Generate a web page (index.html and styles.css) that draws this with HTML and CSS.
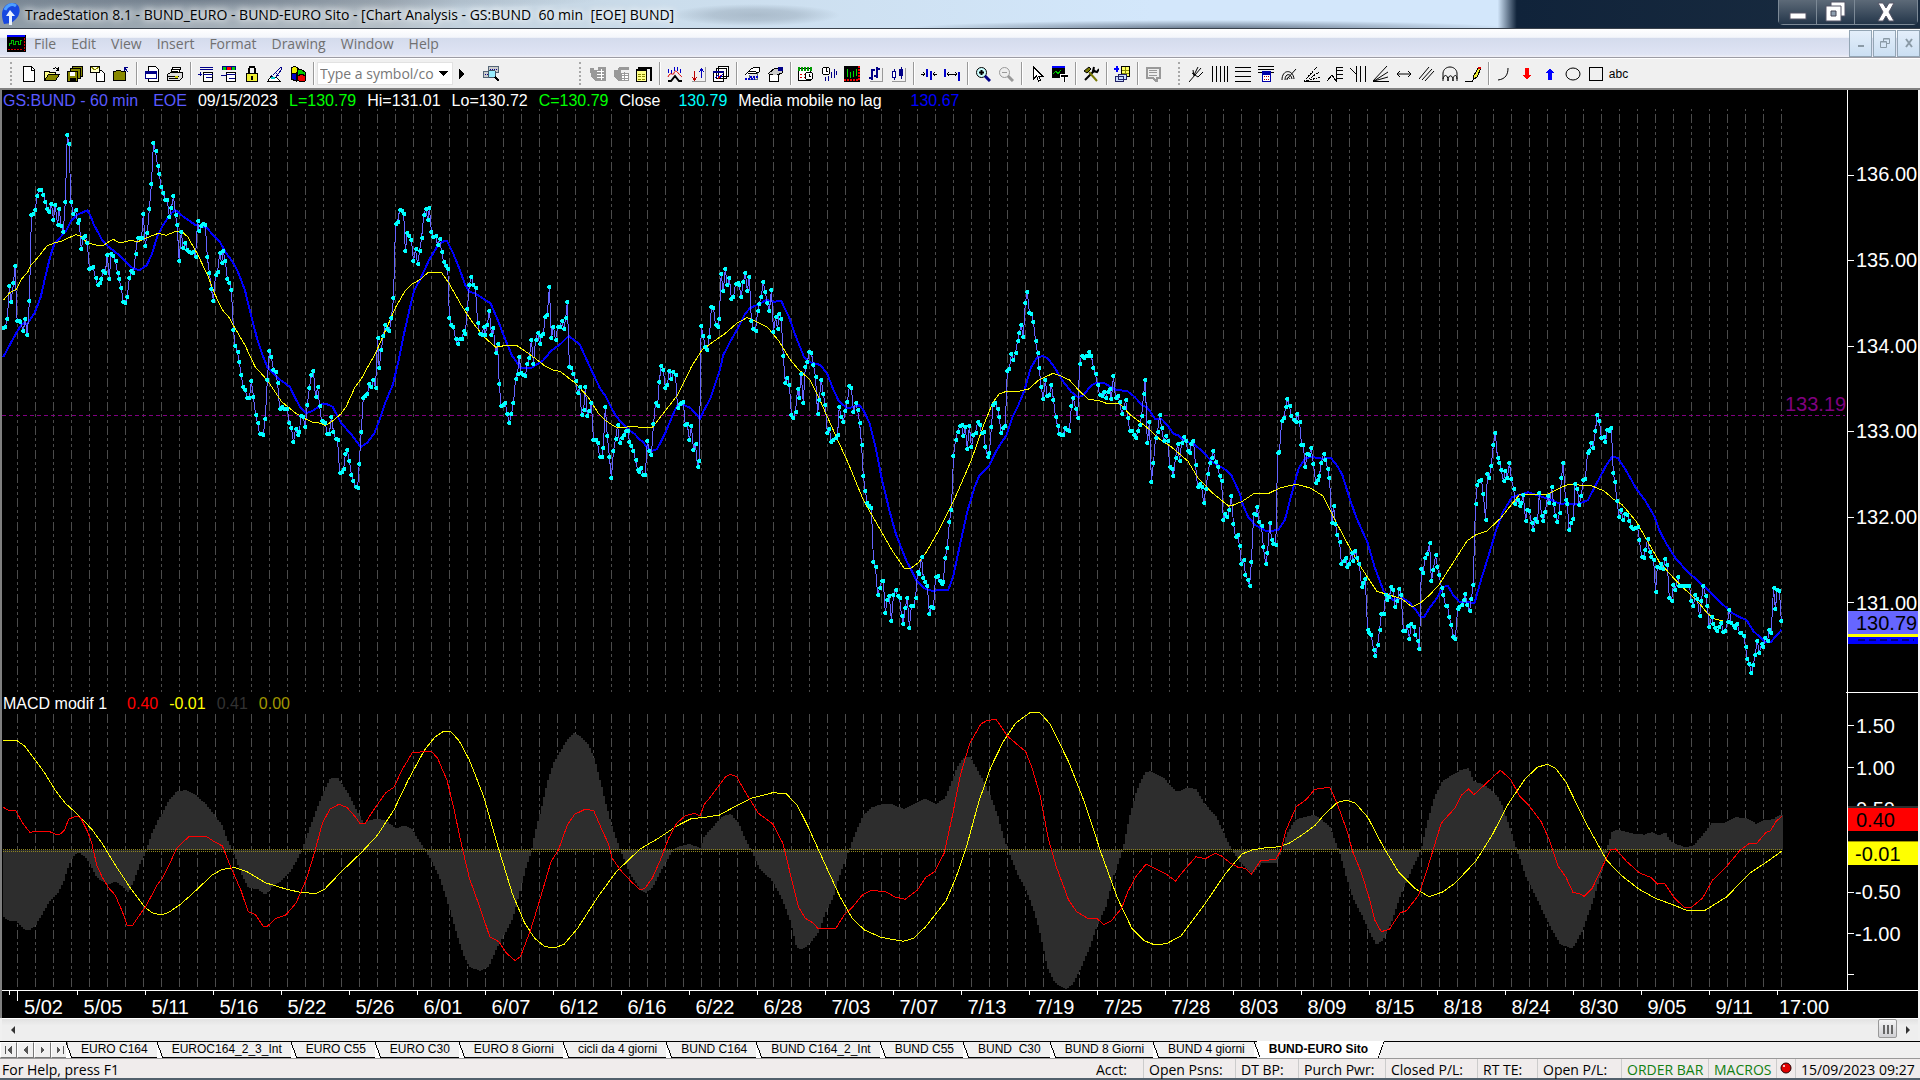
FILE: index.html
```html
<!DOCTYPE html>
<html lang="en">
<head>
    <meta charset="UTF-8">
    <title>TradeStation 8.1 - BUND_EURO</title>
    <link rel="stylesheet" href="styles.css">
</head>
<body>
    <header class="titlebar">
        <svg class="app-icon" width="20" height="24" viewBox="0 0 20 24"><path d="M3 22C-1 12 1 3 10 1c7-1 10 5 8 11-1 4-5 7-8 9z" fill="#1747e0"/><path d="M4 8c2-5 7-7 11-4" stroke="#4fa0ff" stroke-width="3" fill="none"/><path d="M9 8l5 6h-3v9H8v-9H5z" fill="#e8f0ff"/></svg>
        <h1>TradeStation 8.1 - BUND_EURO - BUND-EURO Sito - [Chart Analysis - GS:BUND  60 min  [EOE] BUND]</h1>
        <div class="window-buttons">
            <button aria-label="Minimize"><svg width="20" height="20"><rect x="2" y="11" width="16" height="6" fill="#fff" stroke="#556"/></svg></button>
            <button aria-label="Restore"><svg width="22" height="22"><path d="M6 1h14v14H6z" fill="#fff" stroke="#556"/><path d="M1 5h15v15H1z" fill="#fff" stroke="#556"/><path d="M6 10h5v5H6z" fill="#8fa0b0" stroke="#445"/></svg></button>
            <button class="close" aria-label="Close"><svg width="20" height="20"><path d="M2 1h5l3 5 3-5h5l-5 9 5 9h-5l-3-5-3 5H2l5-9z" fill="#fff" stroke="#556"/></svg></button>
        </div>
    </header>

    <nav class="menubar">
        <svg class="doc-icon" width="19" height="17" viewBox="0 0 19 17" shape-rendering="crispEdges"><path d="M0 0h19v17H0z"/><path d="M0 1h18" stroke="#00f" stroke-width="2"/><path d="M2 11V8h2V5h2v4h2V6h3v3h2V5h2" stroke="#0b0" fill="none"/><path d="M1 14h15M17 3v13" stroke="#d00" stroke-dasharray="2 1"/></svg>
        <a href="#">File</a>
        <a href="#">Edit</a>
        <a href="#">View</a>
        <a href="#">Insert</a>
        <a href="#">Format</a>
        <a href="#">Drawing</a>
        <a href="#">Window</a>
        <a href="#">Help</a>
        <div class="mdi-buttons">
            <button aria-label="Minimize chart"><svg width="12" height="12"><path d="M3 9h6" stroke="#8a9aa6" stroke-width="2"/></svg></button>
            <button aria-label="Restore chart"><svg width="12" height="12" fill="none" stroke="#8a9aa6"><path d="M4.500 4V1.500h6v5H8M1.500 4.500h6v6h-6z"/><path d="M2 5h5M5 2h5"/></svg></button>
            <button aria-label="Close chart"><svg width="12" height="12"><path d="M3 2l6 8M9 2l-6 8" stroke="#8a9aa6" stroke-width="2"/></svg></button>
        </div>
    </nav>

    <div class="toolbars">
        <div class="toolbar">
            <button aria-label="New"><svg viewBox="0 0 16 16"><path d="M2.500.5h8l3 3v12h-11z" fill="#fff" stroke="#000"/><path d="M10.500 1v3h3" fill="none" stroke="#000"/></svg></button>
            <button aria-label="Open"><svg viewBox="0 0 16 16"><path d="M.5 14V5h4l1 1h6v3" fill="#ff8" stroke="#000"/><path d="M.5 14.500l4-6h11l-4 6z" fill="#880" stroke="#000"/><path d="M9 3c2-2 4-1 5 1M14.500 1v3h-3" fill="none" stroke="#000"/></svg></button>
            <button aria-label="Save all"><svg viewBox="0 0 16 16"><path d="M5.500.5h10v10h-10z" fill="#880" stroke="#000"/><path d="M3.500 2.500h10v10h-10z" fill="#880" stroke="#000"/><path d="M.5 5.500h10v10H.5z" fill="#880" stroke="#000"/><path d="M3 6h5v4H3z" fill="#fff"/><path d="M3 12h6v3H3z"/></svg></button>
            <button aria-label="Send workspace"><svg viewBox="0 0 16 16"><path d="M6.500 4.500h5l3 3v8h-8z" fill="#fff" stroke="#000"/><path d="M.5.5h9v6h-9z" fill="#ffc" stroke="#000"/><path d="M1 1l4 3 4-3" fill="none" stroke="#880"/></svg></button>
            <button aria-label="Close workspace"><svg viewBox="0 0 16 16"><path d="M.5 14.500v-9h2l1-1h4l1 1h4v9z" fill="#880" stroke="#000"/><path d="M15 6L11 1M11 5V1h4" fill="none" stroke="#008"/></svg></button>
            <span class="separator"></span>
            <button aria-label="New window"><svg viewBox="0 0 16 16"><path d="M4.500.5h7l3 3v12h-10z" fill="#fff" stroke="#000"/><path d="M1.500 5.500h11v7h-11z" fill="#fff" stroke="#008"/><path d="M1 6.500h12" stroke="#008" stroke-width="3"/></svg></button>
            <button aria-label="Print"><svg viewBox="0 0 16 16"><path d="M4 6l2-5h8l-2 5" fill="#fff" stroke="#000"/><path d="M6 3h6M5 5h6" stroke="#000"/><path d="M.5 8.500l3-2h12v5l-3 3H.5z" fill="#ddd" stroke="#000"/><path d="M1 10h11M2 12h9" stroke="#000"/><path d="M8 11h3" stroke="#cc0" stroke-width="2"/></svg></button>
            <span class="separator"></span>
            <button aria-label="Status bar"><svg viewBox="0 0 16 16"><path d="M2 1h13M2 3h13" stroke="#008"/><path d="M5.500 6.500h9v9h-9z" fill="#fff" stroke="#000"/><path d="M5 8h10M8 11h6" stroke="#008"/><path d="M0 8h4M2 6v4" stroke="#008"/></svg></button>
            <button aria-label="Chart bar"><svg viewBox="0 0 16 16"><path d="M1 2h14" stroke="#008" stroke-width="4"/><path d="M2 2h3" stroke="#0c0" stroke-width="3"/><path d="M6 2h4" stroke="#f00" stroke-width="3"/><path d="M11 2h3" stroke="#0c0" stroke-width="3"/><path d="M5.500 6.500h9v9h-9z" fill="#fff" stroke="#000"/><path d="M5 8h10M0 9h5M8 12h6" stroke="#008"/></svg></button>
            <button aria-label="Lock"><svg viewBox="0 0 16 16"><path d="M5 8V3l1-2h4l1 2v5" fill="none" stroke="#000" stroke-width="2"/><path d="M2.500 7.500h11v8h-11z" fill="#ee3" stroke="#000"/><path d="M7 10h2v4H7z"/></svg></button>
            <button aria-label="EasyLanguage"><svg viewBox="0 0 16 16"><path d="M6 9l8-8 1 2-6 8M8 6l4 4M4 9l4 5" fill="none" stroke="#008"/><path d="M1 15l3-5 3 3 2-2 4 4z" fill="#fff" stroke="#000"/><path d="M4 12h4" stroke="#0cc" stroke-width="2"/></svg></button>
            <button aria-label="Radar screen"><svg viewBox="0 0 16 16"><path d="M1 2l4-2 4 3v5L4 9 1 6z" fill="#ee0" stroke="#000"/><path d="M7 4l4-1 4 3v4H7z" fill="#0c0" stroke="#000"/><path d="M1 8l5-1v8l-5-2z" fill="#00c" stroke="#000"/><path d="M7 10l5-2 3 2v5l-4 1-4-2z" fill="#e00" stroke="#000"/></svg></button>
            <span class="separator"></span>
            <div class="symbol-box">
                <input type="text" placeholder="Type a symbol/co" aria-label="Symbol or company">
                <button aria-label="Symbol history"><svg viewBox="0 0 9 5"><path d="M0 0h9L4.500 5z"/></svg></button>
            </div>
            <button class="go" aria-label="Go"><svg viewBox="0 0 6 10"><path d="M0 0l6 5-6 5z"/></svg></button>
            <button class="lookup" aria-label="Symbol lookup"><svg viewBox="0 0 16 16"><path d="M.5 5.500h8v6h-8zM5.500.5h10v6h-10z" fill="#ccc" stroke="#567"/><path d="M7 3h7M2 8h5" stroke="#008" stroke-dasharray="1 1"/><circle cx="9" cy="8" r="4" fill="#9ef" stroke="#456"/><path d="M12 11l4 4" stroke="#000" stroke-width="2"/></svg></button>
        </div>

        <div class="toolbar charting">
            <button aria-label="Buy order" disabled><svg viewBox="0 0 16 16"><path d="M0 2h4v2h4V1h8v14H5l-4-4z" fill="#999"/><path d="M7 5h7M7 8h7M7 11h7M11 3v11" stroke="#fff"/></svg></button>
            <button aria-label="Sell order" disabled><svg viewBox="0 0 16 16"><path d="M1 4h4l1-3h10v3H8v11H5l-4-5z" fill="#999"/><path d="M8 7h7v7H8z" fill="#fff" stroke="#999"/><path d="M8 9h7M8 12h7M11 6v9" stroke="#999"/></svg></button>
            <button aria-label="Order bar"><svg viewBox="0 0 16 16"><path d="M2 2h14M15 1v14" stroke="#000" stroke-width="2"/><path d="M.5 3.500h10v12H.5z" fill="#ff8" stroke="#000"/><path d="M0 4h11" stroke="#000" stroke-width="2"/><path d="M2 8h7M2 10h7M2 13h7" stroke="#880" stroke-dasharray="3 1"/></svg></button>
            <span class="separator"></span>
            <button aria-label="Insert analysis"><svg class="smooth" viewBox="0 0 16 16"><path d="M1.500 3v4M4.500 4v4M7.500 1v4M10.500 1v4M13.500 3v4" stroke="#00c"/><path d="M1 11c3-7 5 0 6-4 2-5 4 1 8 4" fill="none" stroke="#d00"/><path d="M1 15h3l4-5 4 5h3" fill="none" stroke="#000" stroke-width="2"/></svg></button>
            <button aria-label="Insert strategy"><svg viewBox="0 0 16 16"><path d="M4.500 5v9M2 11l2.500 3L7 11" fill="none" stroke="#b00"/><path d="M11.500 12V3M9 6l2.500-3L14 6" fill="none" stroke="#00b"/><path d="M15.500 1v14H2" fill="none" stroke="#999"/></svg></button>
            <button aria-label="Insert symbol"><svg viewBox="0 0 16 16"><path d="M5.500.5h10v10h-10zM3.500 2.500h10v10h-10zM.5 5.500h10v10H.5z" fill="#fff" stroke="#000"/><path d="M0 6h11" stroke="#008" stroke-width="2"/><path d="M2 12l3-3 2 3 3-4" fill="none" stroke="#00c"/><path d="M5 13l3-4" stroke="#d00"/></svg></button>
            <span class="separator"></span>
            <button aria-label="Format symbol"><svg viewBox="0 0 16 16"><path d="M5.500 5.500h8v8h-8z" fill="#ddd" stroke="#567"/><path d="M1 9l6-6 4-2h4v5l-5 2" fill="#fff" stroke="#000"/><path d="M5 5h7M4 7h6" stroke="#000"/><path d="M1 13h10M6 11h8" stroke="#00c" stroke-width="2" stroke-dasharray="2 1"/></svg></button>
            <button aria-label="Format window"><svg viewBox="0 0 16 16"><path d="M2.500 7.500h9v8h-9z" fill="#fff" stroke="#000"/><path d="M2 8h10" stroke="#000" stroke-width="2"/><path d="M1 8l7-6h7v5l-5 2" fill="#ccc" stroke="#000"/><path d="M11 3h5" stroke="#008" stroke-width="4"/></svg></button>
            <span class="separator"></span>
            <button aria-label="Session"><svg viewBox="0 0 16 16"><path d="M.5 2.500h12v12H.5z" fill="#fff" stroke="#000"/><path d="M0 3h14" stroke="#090" stroke-width="4" stroke-dasharray="2 1"/><path d="M2 8h5M2 11h5" stroke="#d00" stroke-dasharray="2 2"/><circle cx="11" cy="10" r="4" fill="#fff" stroke="#000"/><path d="M11 8v2h2" fill="none" stroke="#000"/></svg></button>
            <button aria-label="Bar interval"><svg viewBox="0 0 16 16"><circle cx="5" cy="5" r="4" fill="#fff" stroke="#000"/><path d="M5 2v3h2" fill="none" stroke="#000"/><path d="M4 11v4M7 10v5M10 6v6M13 3v9M15 5v4" stroke="#008"/></svg></button>
            <button aria-label="Bar type"><svg viewBox="0 0 16 16"><path d="M0 0h16v16H0z"/><path d="M3 3v8M6 6v6M9 5v6M12 3v7" stroke="#0d0"/><path d="M0 14h14M15 0v15" stroke="#e00" stroke-width="2" stroke-dasharray="2 1"/></svg></button>
            <button aria-label="OHLC bars"><svg viewBox="0 0 16 16"><path d="M5 3v11M2 12h3M5 4h3M10 1v11M7 10h3M10 3h3" stroke="#008" stroke-width="2"/><path d="M15.500 2v13H3" fill="none" stroke="#999"/></svg></button>
            <button aria-label="Candlesticks"><svg viewBox="0 0 16 16"><path d="M4 3v11M11 1v12" stroke="#008"/><path d="M2.500 5.500h3v6h-3z" fill="#fff" stroke="#008"/><path d="M9 3h4v7H9z" fill="#008"/><path d="M15.500 2v13H2" fill="none" stroke="#999"/></svg></button>
            <span class="separator"></span>
            <button aria-label="Decrease spacing"><svg viewBox="0 0 16 16"><path d="M6 3v8M10 5v9" stroke="#00c" stroke-width="2"/><path d="M0 8h4M2 6l2 2-2 2M16 8h-4M14 6l-2 2 2 2" fill="none" stroke="#000"/></svg></button>
            <button aria-label="Increase spacing"><svg viewBox="0 0 16 16"><path d="M1 3v8M15 6v9" stroke="#00c" stroke-width="2"/><path d="M3 8h10M5 6L3 8l2 2M11 6l2 2-2 2" fill="none" stroke="#000"/></svg></button>
            <span class="separator"></span>
            <button aria-label="Zoom in"><svg class="smooth" viewBox="0 0 16 16"><circle cx="6.500" cy="6.500" r="5" fill="#cff" stroke="#000"/><path d="M4 6.500h5M6.500 4v5" stroke="#000" stroke-width="2"/><path d="M10 10l5 5" stroke="#008" stroke-width="3"/></svg></button>
            <button aria-label="Zoom out" disabled><svg class="smooth" viewBox="0 0 16 16"><circle cx="6.500" cy="6.500" r="5" fill="#eee" stroke="#999"/><path d="M4 6.500h5" stroke="#999"/><path d="M10 10l5 5" stroke="#999" stroke-width="3"/></svg></button>
            <span class="separator"></span>
            <button aria-label="Pointer"><svg viewBox="0 0 16 16"><path d="M4.500 1v12l3-3 2 5 2-1-2-4h4z" fill="#fff" stroke="#000"/></svg></button>
            <button aria-label="Tracking"><svg viewBox="0 0 16 16"><path d="M0 0h13v12H0z"/><path d="M0 1h13" stroke="#00f" stroke-width="2"/><path d="M1 8l3-3 2 3 3-4" fill="none" stroke="#0c0"/><path d="M8 8h8v3h-3v5h-2v-5H8z" stroke="#fff"/></svg></button>
            <span class="separator"></span>
            <button aria-label="Tools"><svg class="smooth" viewBox="0 0 16 16"><path d="M2 14L12 4" stroke="#000" stroke-width="2"/><path d="M11 1l-1 4 4 1 2-3" fill="none" stroke="#000" stroke-width="2"/><path d="M6 6l8 9" stroke="#770" stroke-width="2"/><path d="M1 5l5-4 2 2-4 4z" fill="#770" stroke="#000"/></svg></button>
            <span class="separator"></span>
            <button aria-label="Add to list"><svg viewBox="0 0 16 16"><path d="M7.500.5h8v10h-8z" fill="#ff6" stroke="#000"/><path d="M8 4h7M8 7h7M11 1v9" stroke="#880"/><path d="M4.500 8.500h8v5h-8zM1.500 10.500h8v5h-8z" fill="#cdf" stroke="#226"/><path d="M0 3h5M2.500 0v6" stroke="#00f" stroke-width="2"/></svg></button>
            <span class="separator"></span>
            <button aria-label="Notes" disabled><svg viewBox="0 0 16 16"><path d="M1.500 1.500h13v10h-3v4l-4-4h-6z" fill="#eee" stroke="#999" stroke-width="2"/><path d="M4 4h8M4 6h8M4 9h8" stroke="#999"/></svg></button>
        </div>

        <div class="toolbar drawing">
            <button aria-label="Andrews pitchfork"><svg class="smooth" viewBox="0 0 16 16"><path d="M0 16l6-7M3 7l6 4 5-5M5 9l4-8M6 9l6-7M4 4l1 6"/></svg></button>
            <button aria-label="Vertical lines"><svg viewBox="0 0 16 16"><path d="M.5 0v16M4.500 0v16M8.500 0v16M12.500 0v16M15.500 0v16"/></svg></button>
            <button aria-label="Horizontal lines"><svg viewBox="0 0 16 16"><path d="M0 1.500h16M0 5.500h16M0 10.500h16M0 15.500h16"/></svg></button>
            <button aria-label="Retracement calculator"><svg viewBox="0 0 16 16"><path d="M0 .5h16M0 3.500h16M0 6.500h16"/><path d="M4.500 5.500h8v10h-8z" fill="#fff" stroke="#00a"/><path d="M5 7h7" stroke="#00a" stroke-width="3"/><path d="M6 10.500h6M6 13.500h6" stroke="#a00" stroke-dasharray="1 1"/></svg></button>
            <button aria-label="Fibonacci arcs"><svg class="smooth" viewBox="0 0 16 16"><path d="M1 14c0-11 11-11 12-1M4 14c0-7 6-7 7-1M6 13l9-10M6 14c0-3 2-3 3-1"/></svg></button>
            <button aria-label="Gann fan"><svg viewBox="0 0 16 16"><path d="M0 15.500h16" /><path d="M0 15L13 1M2 15l13-9M3 15l13-4" stroke-dasharray="2 1"/></svg></button>
            <button aria-label="Price extension"><svg viewBox="0 0 16 16"><path d="M0 15l5-6 4 6V1h7M9 4.500h7M9 8.500h7M9 12.500h7"/></svg></button>
            <button aria-label="Time extension"><svg viewBox="0 0 16 16"><path d="M0 2l6 6V0M6.500 0v16M10.500 0v16M15.500 0v16"/></svg></button>
            <button aria-label="Speed lines"><svg class="smooth" viewBox="0 0 16 16"><path d="M0 15.500h16M0 15L14 0M1 15l14-9M1 15l14-4"/></svg></button>
            <button aria-label="Time line"><svg class="smooth" viewBox="0 0 16 16"><path d="M1 8h14M4 5L1 8l3 3M12 5l3 3-3 3"/></svg></button>
            <button aria-label="Parallel lines"><svg class="smooth" viewBox="0 0 16 16"><path d="M0 13L10 1M3 14L13 3M6 15l9-10"/></svg></button>
            <button aria-label="Cycle arcs"><svg class="smooth" viewBox="0 0 16 16"><path d="M1 15V7c1-8 13-8 14 0v8M1 13c1-5 5-5 5 2 0-7 5-7 5 0 0-7 4-7 4-2"/></svg></button>
            <button aria-label="Trend pencil"><svg viewBox="0 0 16 16"><path d="M0 15.500h8"/><path d="M8 14l1-5 5-8 2 1-4 9z" fill="#ee3"/><path d="M13 2h3" stroke="#d00" stroke-width="2"/></svg></button>
            <span class="separator"></span>
            <button aria-label="Arc"><svg class="smooth" viewBox="0 0 16 16"><path d="M2 14c8-1 10-6 10-12"/></svg></button>
            <button aria-label="Down arrow"><svg viewBox="0 0 16 16"><path d="M6 2h4v7h2l-4 5-4-5h2z" fill="#f00" stroke="none"/></svg></button>
            <button aria-label="Up arrow"><svg viewBox="0 0 16 16"><path d="M6 14h4V7h2L8 2 4 7h2z" fill="#00f" stroke="none"/></svg></button>
            <button aria-label="Ellipse"><svg class="smooth" viewBox="0 0 16 16"><ellipse cx="8" cy="8" rx="7" ry="6"/></svg></button>
            <button aria-label="Rectangle"><svg viewBox="0 0 16 16"><path d="M1.500 1.500h13v13h-13z"/></svg></button>
            <button class="text-tool">abc</button>
        </div>
    </div>

    <main class="chart">
        <section class="pane">
            <div class="legend">
                <span class="symbol">GS:BUND - 60 min</span>
                <span class="symbol session">EOE</span>
                <span>09/15/2023</span>
                <span class="up">L=130.79</span>
                <span>Hi=131.01</span>
                <span>Lo=130.72</span>
                <span class="up">C=130.79</span>
                <span>Close</span>
                <span class="close-value">130.79</span>
                <span>Media mobile no lag</span>
                <span class="average-value">130.67</span>
            </div>
            <svg id="price" viewBox="2 90 1916 603">
                <g class="grid"></g>
                <path class="level" d="M2 415.500H1845"/>
                <path class="average"/>
                <path class="close-line"/>
                <path class="average-slow"/>
                <path class="dots"/>
                <path class="axis" d="M1847.500 90V693M1846 692.500H1918M1848 175.500h6M1848 260.500h6M1848 346.500h6M1848 431.500h6M1848 517.500h6M1848 602.500h6"/>
                <g class="axis-text">
                    <text x="1856" y="181">136.00</text>
                    <text x="1856" y="267">135.00</text>
                    <text x="1856" y="353">134.00</text>
                    <text x="1856" y="438">133.00</text>
                    <text x="1856" y="524">132.00</text>
                    <text x="1856" y="610">131.00</text>
                    <text class="level-text" x="1785" y="411">133.19</text>
                </g>
                <rect x="1848" y="634" width="70" height="10" fill="#00f"/>
                <path d="M1858 639.500h56" stroke="#000078" stroke-width="2" stroke-dasharray="7 4"/>
                <rect x="1848" y="611" width="70" height="23" fill="#66f"/>
                <rect x="1848" y="634" width="70" height="3" fill="#ff0"/>
                <text class="tag-text" x="1856" y="630">130.79</text>
            </svg>
        </section>

        <section class="pane">
            <div class="legend">
                <span class="study">MACD modif 1</span>
                <span class="fast">0.40</span>
                <span class="slow">-0.01</span>
                <span class="histogram-value">0.41</span>
                <span class="zero-value">0.00</span>
            </div>
            <svg id="macd" viewBox="2 693 1916 325">
                <g class="grid"></g>
                <path class="histogram"/>
                <path class="zero" d="M3 849.500H1782M3 851.500H1782"/>
                <path class="slow-line"/>
                <path class="fast-line"/>
                <path class="axis" d="M1847.500 693V990M2 990.500H1918M1848 725.500h6M1848 767.500h6M1848 892.500h6M1848 933.500h6M1848 974.500h6"/>
                <g class="axis-text">
                    <text x="1856" y="733">1.50</text>
                    <text x="1856" y="775">1.00</text>
                    <text x="1856" y="816">0.50</text>
                    <text x="1855" y="899">-0.50</text>
                    <text x="1855" y="941">-1.00</text>
                </g>
                <rect x="1848" y="806" width="70" height="2" fill="#2d2d2d"/>
                <rect x="1848" y="808" width="70" height="23" fill="#f00"/>
                <rect x="1848" y="841" width="70" height="24" fill="#ff0"/>
                <path d="M1848 841.500h70" stroke="#a09600"/>
                <text class="tag-text" x="1856" y="827">0.40</text>
                <text class="tag-text" x="1855" y="861">-0.01</text>
                <g class="dates axis-text"></g>
            </svg>
        </section>
    </main>

    <div class="scrollbar">
        <button aria-label="Scroll left"><svg width="6" height="10"><path d="M5 1v8L1 5z" fill="#333"/></svg></button>
        <div class="track"><div class="thumb"></div></div>
        <button aria-label="Scroll right"><svg width="6" height="10"><path d="M1 1v8l4-4z" fill="#333"/></svg></button>
    </div>

    <nav class="tabs">
        <div class="tab-arrows">
            <button aria-label="First tab"><svg width="9" height="8"><path d="M1 0v8M7 1v6L4 4z"/></svg></button>
            <button aria-label="Previous tab"><svg width="9" height="8"><path d="M6 1v6L3 4z"/></svg></button>
            <button aria-label="Next tab"><svg width="9" height="8"><path d="M3 1v6l3-3z"/></svg></button>
            <button aria-label="Last tab"><svg width="9" height="8"><path d="M2 1v6l3-3zM8 0v8"/></svg></button>
        </div>
        <button class="tab">EURO C164</button>
        <button class="tab">EUROC164_2_3_Int</button>
        <button class="tab">EURO C55</button>
        <button class="tab">EURO C30</button>
        <button class="tab">EURO 8 Giorni</button>
        <button class="tab">cicli da 4 giorni</button>
        <button class="tab">BUND C164</button>
        <button class="tab">BUND C164_2_Int</button>
        <button class="tab">BUND C55</button>
        <button class="tab">BUND  C30</button>
        <button class="tab">BUND 8 Giorni</button>
        <button class="tab">BUND 4 giorni</button>
        <button class="tab active">BUND-EURO Sito</button>
    </nav>

    <footer class="statusbar">
        <span class="help">For Help, press F1</span>
        <span class="cell">Acct:</span>
        <span class="cell w92">Open Psns:</span>
        <span class="cell w63">DT BP:</span>
        <span class="cell w87">Purch Pwr:</span>
        <span class="cell w92">Closed P/L:</span>
        <span class="cell w60">RT TE:</span>
        <span class="cell w84">Open P/L:</span>
        <span class="cell w87 on">ORDER BAR</span>
        <span class="cell w68 on">MACROS</span>
        <span class="cell led"><svg width="13" height="13"><circle cx="6" cy="6" r="5" fill="#e00000" stroke="#200"/><circle cx="4" cy="4" r="1" fill="#fff"/></svg></span>
        <span class="cell clock">15/09/2023 09:27</span>
    </footer>

    <script src="chart.js"></script>
</body>
</html>
```
FILE: styles.css
```css
:root {
    --face: #f0f0f0;
    --ui-font: "Open Sans", "Noto Sans", sans-serif;
    --chart-font: "Liberation Sans", Arial, sans-serif;
    --line-blue: #6464ff;
}

* {
    box-sizing: border-box;
}

body {
    margin: 0;
    background: var(--face);
    color: #000;
    font: 14px/20px var(--ui-font);
}

button {
    padding: 0;
    border: 0;
    background: none;
    color: inherit;
    font: inherit;
}

/* Title bar */
.titlebar {
    display: flex;
    align-items: flex-start;
    height: 29px;
    padding-left: 1px;
    border-bottom: 1px solid #3a424c;
    background:
        radial-gradient(closest-side, rgba(120,135,150,0.4), rgba(120,135,150,0.3) 50%, transparent) 670px 4px / 170px 22px no-repeat,
        radial-gradient(closest-side, rgba(50,65,85,0.7), transparent) 900px 20px / 620px 18px no-repeat,
        radial-gradient(closest-side, rgba(50,65,85,0.4), transparent) -200px -12px / 800px 24px no-repeat,
        linear-gradient(to right, #8d9aa5, #b4bec6 20%, #c3d2de 24%, #cbddec 35%, #d3e7fb 60%, #d3e7fb 78%, #10233a 79%, #1a2c40);
}

.app-icon {
    margin-top: 2px;
}

.titlebar h1 {
    margin: 5px 0 0 4px;
    font-size: 14px;
    font-weight: 400;
    line-height: 20px;
    white-space: pre;
    text-shadow: 0 0 6px #fff, 0 0 10px #fff;
}

.window-buttons {
    display: flex;
    margin: 0 2px 0 auto;
    border: 1px solid #7c8996;
    border-top: 0;
    border-radius: 0 0 5px 5px;
}

.window-buttons button {
    display: grid;
    place-items: center;
    width: 38px;
    height: 24px;
    background: linear-gradient(#5d6a78, #24364a);
    border-right: 1px solid #7c8996;
}

.window-buttons .close {
    width: 62px;
    border-right: 0;
}

/* Menu */
.menubar {
    display: flex;
    align-items: center;
    gap: 15px;
    height: 29px;
    padding-left: 7px;
    border-bottom: 1px solid #9c9ca4;
    background: linear-gradient(#fff, #f4f6fb 30%, #d4dbec 32%, #dfe4f4 90%, #f0f0f6);
}

.menubar a {
    padding-top: 1px;
    color: #707070;
    text-decoration: none;
}

.doc-icon {
    margin-right: -7px;
}

.mdi-buttons {
    display: flex;
    gap: 1px;
    margin-left: auto;
}

.mdi-buttons button {
    display: grid;
    place-items: center;
    width: 23px;
    height: 27px;
    border: 1px solid #93a5b4;
    background: linear-gradient(#e3eefa, #cbdff2);
}

/* Toolbars */
.toolbars {
    display: flex;
    height: 32px;
    border-top: 1px solid #fff;
    border-bottom: 2px solid #808080;
}

.toolbar {
    position: relative;
    display: flex;
    align-items: center;
    padding-left: 17px;
}

.toolbar::before {
    content: "";
    position: absolute;
    left: 10px;
    top: 3px;
    bottom: 3px;
    border-left: 2px dotted #a8a8a8;
}

.charting {
    margin-left: 67px;
}

.drawing {
    margin-left: 4px;
}

.toolbar button {
    display: grid;
    place-items: center;
    width: 23px;
    height: 24px;
}

.toolbar svg {
    width: 16px;
    height: 16px;
    shape-rendering: crispEdges;
}

.toolbar svg.smooth {
    shape-rendering: auto;
}

.drawing svg {
    fill: none;
    stroke: #000;
}

.separator {
    width: 8px;
    height: 23px;
    border-left: 1px solid #999;
    border-right: 6px solid transparent;
    background: #fff;
    background-clip: padding-box;
    margin-left: 4px;
    margin-right: -4px;
}

.symbol-box {
    display: flex;
    align-items: center;
    width: 136px;
    height: 23px;
    background: #fff;
    border: 1px solid #e2e2e2;
}

.symbol-box input {
    flex: 1;
    min-width: 0;
    padding: 0 0 0 2px;
    border: 0;
    background: none;
    font: inherit;
}

.symbol-box input::placeholder {
    color: #777;
    opacity: 1;
}

.toolbar .symbol-box button {
    width: 17px;
}

.toolbar .symbol-box svg {
    width: 9px;
    height: 5px;
}

.toolbar .go {
    width: 18px;
}

.toolbar .go svg {
    width: 6px;
    height: 10px;
}

.toolbar .lookup {
    margin-left: 8px;
}

.toolbar .text-tool {
    font: 12px/16px var(--chart-font);
}

/* Chart */
.chart {
    border-left: 2px solid #808080;
    border-right: 2px solid #f4f4f4;
    background: #000;
}

.pane {
    position: relative;
}

.pane svg {
    display: block;
    width: 100%;
    height: auto;
    fill: none;
    shape-rendering: crispEdges;
}

.legend {
    position: absolute;
    top: 0;
    left: 1px;
    display: flex;
    gap: 11px;
    color: #fff;
    font: 16px/22px var(--chart-font);
    white-space: nowrap;
}

.symbol { color: #5a5aff; }
.session { margin-left: 4px; }
.up { color: #00ff00; }
.close-value { color: #00ffff; margin-left: 7px; }
.average-value { color: #0000ff; margin-left: 18px; }
.study { margin-right: 9px; }
.fast { color: #ff0000; }
.slow { color: #ffff00; }
.histogram-value { color: #323232; }
.zero-value { color: #a09600; }

.grid {
    stroke: #4b4b4b;
    stroke-dasharray: 9 3 3 3 3 3;
}

#price .grid {
    stroke-dashoffset: 19;
}

.level {
    stroke: #800080;
    stroke-dasharray: 4 3;
}

.close-line { stroke: var(--line-blue); }
.average { stroke: #0000ff; stroke-width: 2; }
.average-slow, .slow-line { stroke: #ffff00; }
.fast-line { stroke: #ff0000; }
.dots { fill: #00ffff; }
.histogram { fill: #2d2d2d; }
.zero { stroke: #8c8420; stroke-dasharray: 1 1; }
.axis { stroke: #fff; }

.axis-text,
.tag-text {
    fill: #fff;
    font: 20px var(--chart-font);
}

.level-text { fill: #800080; }
.tag-text { fill: #000; }

/* Horizontal scroll bar */
.scrollbar {
    display: flex;
    height: 23px;
    margin: 0 2px;
    border-top: 1px solid #fff;
    background: linear-gradient(#e2e2e2, #eee 30%, #eee);
}

.scrollbar button {
    width: 21px;
}

.track {
    flex: 1;
    display: flex;
    justify-content: flex-end;
}

.thumb {
    width: 19px;
    height: 19px;
    border: 1px solid #999;
    border-radius: 2px;
    background:
        repeating-linear-gradient(to right, #666 0 2px, transparent 2px 4px) 4px 5px / 10px 9px no-repeat,
        linear-gradient(#f4f4f4, #d0d0d4);
}

/* Workspace tabs */
.tabs {
    display: flex;
    height: 18px;
    border-top: 1px solid #000;
    border-bottom: 1px solid #999;
    font: 12px/15px var(--chart-font);
    white-space: pre;
}

.tab-arrows {
    display: flex;
    margin-right: 1px;
}

.tab-arrows button {
    display: grid;
    place-items: center;
    width: 17px;
    height: 16px;
    border: 1px solid #777;
    border-top-color: #fff;
    border-left-color: #fff;
}

.tab-arrows svg {
    fill: #555;
    stroke: #555;
    shape-rendering: crispEdges;
}

.tab {
    position: relative;
    height: 16px;
    padding: 0 12px;
    border-bottom: 1px solid #000;
}

.tab::before {
    content: "";
    position: absolute;
    left: -3px;
    top: 0;
    width: 6px;
    height: 16px;
    background: linear-gradient(to bottom left, transparent 47%, #000 47%, #000 55%, #fff 55%);
}

.tab.active {
    margin-top: -1px;
    height: 17px;
    padding: 0 16px 0 12px;
    border: 0;
    background: linear-gradient(to bottom right, #fff 48%, #000 48%, #000 55%, var(--face) 55%) right / 6px 100% no-repeat, linear-gradient(#fff, #fff) left / calc(100% - 6px) 100% no-repeat;
    font-weight: bold;
}

/* Status bar */
.statusbar {
    display: flex;
    height: 21px;
    line-height: 21px;
    padding-right: 4px;
    border-bottom: 2px solid #52606c;
    background: #f0ecec;
    white-space: nowrap;
}

.help {
    flex: 1;
    padding-left: 2px;
}

.cell {
    width: 53px;
    padding-left: 5px;
    border-right: 1px solid #ccc;
}

.w60 { width: 60px; }
.w63 { width: 63px; }
.w68 { width: 68px; }
.w84 { width: 84px; }
.w87 { width: 87px; }
.w92 { width: 92px; }
.on { color: #128012; }
.led { width: 19px; padding-left: 3px; }
.clock { width: 120px; border-right: 0; }
```
FILE: chart.js
```js
const BAR = 2;
const DATES = ['5/05', '5/11', '5/16', '5/22', '5/26', '6/01', '6/07', '6/12', '6/16', '6/22', '6/28', '7/03', '7/07',
    '7/13', '7/19', '7/25', '7/28', '8/03', '8/09', '8/15', '8/18', '8/24', '8/30', '9/05', '9/11', '17:00'];

// Every series is digitised in blocks: left edge, top edge, units per pixel in x, then x,y pairs (y has 3 units per pixel)
const FINE = 2.45;
const COARSE = 2.1778;

const close = [
    [0, 110, FINE, '8,655 13,650 18,627 23,528 27,575 33,519 37,467 42,632 50,635 57,662 62,627 67,675 72,573 77,315 81,313 86,300 91,258 96,240 101,240 106,255 111,275 116,296 121,306 126,281 131,329 135,285 141,345 145,297 150,348 155,366 160,276 165,74 169,102 174,276 180,312 185,300 190,339 194,330 199,417 204,384 209,378 214,400 219,476 228,470 234,504 239,524 244,520 248,507 253,482 258,489 263,434 268,507 272,432 277,438 283,453 288,489 292,507 297,534 302,575 307,578 312,560 317,504 322,483 327,489 332,432 337,384 347,384 351,312 356,408 361,369 366,297 371,222 376,98 381,123 386,168 390,192 395,231 400,249 405,270 410,270 415,321 420,294 425,258 430,315 434,345 439,453 444,366 449,413 454,399 459,420 464,427 469,430 474,425 479,441 484,333 488,363 493,348 498,342 503,345 508,441 513,489 518,537 523,573 528,495 533,486 538,429 543,459 547,423 552,453 557,507 562,519 567,540 572,660 576,708 582,726 586,756 591,795 596,831 601,839 606,864 611,864 616,813 621,861 626,914 631,939 636,971 645,975 650,927 655,810 660,722 665,741 670,780 675,786 680,819 685,897 690,891 695,897 704,898 709,939 714,954 719,996 724,957 729,975 733,966 738,918 743,922 748,951 753,885 758,834 763,795 768,783 773,861 778,831 783,888 788,933 797,940 802,971 807,971 812,921 817,966 822,987 827,990 832,1089 837,1086 842,1077 846,1032 851,1020 856,1053 861,1095 866,1113 871,1131 876,1134 880,1062 885,966 890,863 895,858 900,852 905,822 910,831 915,810 920,834 925,684 929,774 934,720 939,678 944,645 949,657 954,663 959,624 964,564 969,342 974,336 979,300 984,303 989,312 993,423 998,369 1003,378 1008,390 1013,453 1018,417 1023,462 1028,423 1033,384 1038,315 1043,297 1048,330 1052,294 1057,366 1062,381 1067,378 1072,405 1077,387 1082,426 1087,456 1092,468 1097,477 1101,624 1106,645 1111,651 1116,687 1121,702 1126,687 1131,687 1136,663 1140,672 1145,597 1150,525 1155,500 1160,525 1165,534 1170,639 1175,672 1180,675 1185,651 1189,675 1194,645 1199,603 1204,675 1209,654 1214,729 1219,702 1223,822 1228,887 1238,880 1243,911 1248,939 1253,911 1258,879 1263,807 1268,791 1272,741 1277,789 1287,798 1292,762 1297,744 1302,690 1307,762 1312,690 1317,669 1322,702 1326,678 1331,672 1336,621 1341,615 1346,531 1351,684 1356,651 1361,690 1366,651 1371,651 1376,633 1381,657 1386,624 1390,576 1395,771 1400,774 1405,792 1410,813 1415,849 1420,831 1425,915 1430,900 1434,831 1439,918 1444,903 1449,879 1454,990 1459,990 1464,999 1469,1041 1474,1041 1478,1014 1483,890 1488,978 1493,1041 1498,1104 1503,1023 1508,987 1513,945 1518,999 1523,985 1533,963 1538,963 1542,996 1547,1008 1552,1023 1557,1050 1562,1080 1566,1086'],
    [600, 240, FINE, '101,684 106,705 111,705 116,603 121,633 126,645 131,552 136,489 141,498 145,426 150,378 155,390 160,444 165,435 170,393 175,417 180,396 185,405 190,504 195,492 204,486 209,555 214,552 219,600 224,558 229,630 234,612 239,681 243,663 248,258 253,288 258,321 263,330 268,291 273,201 278,204 283,255 288,261 292,237 297,102 302,153 307,87 312,135 317,114 322,177 327,171 332,132 337,129 341,135 346,171 351,126 356,99 361,153 366,111 371,243 376,267 381,273 386,213 390,192 395,171 400,126 405,156 410,189 415,213 420,150 425,276 430,231 435,267 439,222 444,237 449,348 454,429 459,414 464,435 469,525 474,534 479,516 484,447 488,474 493,402 498,489 503,381 508,366 513,336 518,339 523,375 528,411 533,521 537,480 542,420 547,462 552,495 557,579 562,567 567,606 572,600 577,594 582,585 586,500 591,531 596,546 601,513 606,486 611,438 616,444 621,516 626,489 631,510 636,549 641,615 645,708 650,753 655,789 665,804 670,966 675,981 680,1065 685,1044 690,1023 694,1023 699,1119 704,1080 709,1068 714,1143 719,1065 724,1050 729,1068 734,1074 739,1128 743,1152 748,1104 753,1074 758,1164 763,1098 768,1098 773,1074 778,996 782,1002 788,951 792,1014 797,1026 802,1038 807,1122 812,1101 817,1104 822,1011 827,1008 832,1023 837,1032 841,1026 846,954 851,924 856,846 861,810 866,648 871,600 876,576 881,558 886,555 890,588 895,561 900,627 905,558 910,621 915,585 920,579 925,546 930,555 935,579 940,576 944,621 950,651 954,639 959,561 963,495 968,489 974,507 978,531 983,579 988,564 993,558 998,393 1003,387 1008,342 1013,360 1018,339 1023,303 1027,279 1032,255 1037,291 1042,189 1047,156 1052,219 1057,222 1062,246 1067,303 1072,339 1076,384 1081,441 1086,477 1091,420 1096,468 1101,465 1106,435 1111,480 1116,531 1121,558 1125,582 1135,585 1140,564 1150,573 1155,498 1160,474 1165,507 1170,534 1175,372 1180,348 1185,354 1190,348 1195,348 1199,336 1204,348 1209,384 1214,402 1219,435 1224,465 1229,468 1234,456 1239,474 1244,456 1249,447 1253,477 1258,408 1263,474 1268,468 1273,486 1278,521 1283,504 1288,480 1293,534 1298,573 1303,573 1308,585 1313,594 1318,573 1322,555 1327,528 1332,462 1336,420 1341,609 1346,546 1351,726 1356,669 1361,594 1366,576 1371,525 1376,564 1381,603 1386,588 1391,603 1396,681 1401,687 1405,708 1410,654 1415,612 1420,663 1425,609 1430,591 1435,603 1440,633 1445,639 1449,612 1454,603 1459,675 1464,741 1469,732 1474,741 1479,789 1484,747 1489,702 1494,669 1499,654 1503,633 1508,666 1513,681 1518,708 1523,723 1527,840 1532,822 1537,831 1542,810 1547,768 1552,852 1557,891 1562,885 1567,918'],
    [1200, 370, COARSE, '90,582 95,570 99,615 104,630 108,648 112,575 117,432 121,435 125,411 129,456 134,468 138,531 143,582 147,549 152,459 156,510 160,522 165,525 169,250 173,246 178,153 182,144 187,111 190,87 195,108 199,138 204,150 208,156 212,132 217,156 221,225 225,225 229,291 234,252 238,255 242,234 247,282 252,339 256,330 260,318 264,279 269,252 273,270 278,297 282,324 287,459 291,408 295,462 299,495 304,516 308,582 313,573 317,564 321,591 325,582 330,550 334,573 338,543 343,564 347,582 352,651 360,627 365,780 373,795 378,840 382,858 387,825 391,780 395,732 400,732 404,675 408,690 412,681 417,651 421,660 425,711 430,693 434,657 438,675 443,783 447,783 452,768 456,807 460,762 465,771 469,795 474,813 478,837 482,597 486,609 490,564 495,552 500,519 504,633 508,600 513,555 517,591 521,615 526,654 530,675 535,708 539,708 543,741 547,765 552,801 556,807 561,717 565,711 570,705 574,690 578,672 582,705 587,723 591,687 595,645 600,402 604,345 608,333 613,330 617,372 622,450 626,312 630,324 634,288 639,225 643,189 648,264 652,279 656,300 661,333 665,303 669,324 674,279 678,327 683,357 687,402 692,390 696,408 700,399 704,375 709,453 713,420 717,423 722,459 726,480 730,447 735,456 739,369 744,438 748,453 752,426 757,378 761,399 766,351 770,402 774,438 778,456 783,429 787,324 791,279 796,390 800,402 804,480 809,459 813,447 817,342 822,357 826,405 830,378 835,330 839,327 844,249 848,243 852,219 856,234 861,183 865,135 870,153 874,204 879,201 883,216 887,180 891,183 896,174 900,309 904,336 908,393 913,441 917,420 922,450 926,432 931,435 935,453 939,471 943,477 953,471 957,510 962,561 966,564 970,540 975,507 979,546 983,561 988,570 992,666 996,591 1001,594 1005,582 1009,597 1013,567 1018,585 1022,684 1027,693 1031,645 1035,660 1040,621 1044,648 1066,648 1070,693 1074,708 1079,675 1083,687 1088,738 1096,648 1101,678 1105,708 1109,771 1114,741 1118,762 1122,774 1127,783 1131,771 1135,759 1140,786 1144,783 1149,756 1153,720 1157,759 1162,768 1166,774 1170,762 1175,789 1179,789 1184,798 1188,831 1192,867 1196,882 1201,909 1205,885 1209,855 1214,813 1218,849 1223,822 1227,831 1231,804 1236,813 1240,780 1244,789 1249,654 1253,717 1257,660 1262,663 1266,753']
];

const average = [
    [0, 110, FINE, '8,741 26,700 42,665 52,645 60,639 67,642 85,608 100,560 115,480 123,440 133,402 155,372 163,360 173,335 190,314 214,301 222,318 230,344 250,389 265,410 280,424 300,444 318,468 328,477 343,480 360,465 373,430 385,380 400,344 420,309 430,300 450,321 480,346 493,350 505,350 525,380 537,392 552,425 572,460 582,483 600,540 616,620 630,686 645,741 655,771 680,804 710,830 722,861 735,890 750,910 765,903 790,882 800,882 815,890 835,938 860,972 884,1011 900,998 917,970 930,930 945,875 962,825 975,760 990,670 1003,600 1015,540 1030,507 1050,453 1070,412 1082,396 1095,392 1110,430 1125,475 1140,525 1150,545 1165,551 1202,580 1220,632 1235,680 1255,738 1277,775 1300,775 1330,752 1350,723 1375,700 1393,678 1420,703 1445,770 1470,835 1485,861 1505,910 1520,935 1545,964 1555,972 1568,990'],
    [600, 240, FINE, '103,603 115,621 127,633 140,627 160,579 180,520 190,495 205,495 222,504 245,536 255,510 270,477 280,440 293,393 302,345 320,303 340,260 355,222 368,204 385,195 408,180 425,185 444,183 463,231 480,290 500,352 512,366 540,375 557,402 572,450 585,483 605,504 618,502 635,496 645,510 660,548 675,620 690,714 710,816 725,882 750,960 775,1020 795,1045 812,1052 853,1050 865,1010 880,925 900,815 918,740 930,705 953,678 970,635 985,605 995,588 1010,533 1025,495 1040,450 1055,385 1070,354 1085,348 1097,355 1115,385 1135,425 1155,456 1170,471 1182,468 1205,435 1215,429 1235,429 1265,450 1292,453 1310,471 1330,498 1340,501 1360,536 1375,536 1390,555 1405,582 1415,585 1430,603 1455,612 1475,633 1500,666 1530,687 1547,706 1568,762'],
    [1200, 370, COARSE, '91,396 105,441 120,465 145,484 170,480 185,450 200,370 215,295 230,264 245,261 265,266 285,264 300,290 310,315 325,381 340,441 365,518 380,590 400,664 420,690 440,684 455,696 470,720 480,741 488,741 500,714 515,686 530,650 540,648 550,672 565,696 598,698 612,630 630,550 645,480 660,425 680,381 715,367 740,378 765,390 785,402 800,399 815,404 830,399 845,390 862,345 885,285 898,260 910,264 930,306 950,356 970,393 990,440 1000,480 1015,520 1035,564 1060,602 1090,640 1110,664 1130,693 1160,730 1175,741 1190,750 1205,783 1230,815 1243,816 1266,780']
];

const averageSlow = [
    [0, 110, FINE, '8,571 25,547 40,538 53,507 68,486 75,466 90,447 115,408 135,398 150,394 185,374 197,378 215,399 245,408 255,405 268,394 278,388 292,399 318,392 340,394 370,378 388,370 408,376 430,364 445,364 460,381 485,435 510,500 525,549 545,600 560,620 575,653 600,705 625,770 655,811 690,875 725,910 750,928 765,936 780,938 797,946 812,936 835,912 848,890 870,831 885,807 905,762 920,730 945,660 970,590 993,542 1010,522 1030,508 1048,488 1082,488 1100,520 1130,585 1155,632 1185,680 1215,712 1240,706 1268,708 1285,722 1310,744 1335,768 1355,780 1372,784 1410,820 1440,860 1465,908 1485,933 1508,951 1530,952 1550,949 1568,952'],
    [600, 240, FINE, '98,561 128,563 150,528 190,465 225,378 250,330 280,303 305,282 335,250 360,233 375,240 410,261 440,306 465,357 485,387 515,420 535,470 555,525 580,593 610,675 645,780 680,855 715,930 745,984 760,986 780,968 800,936 835,860 870,773 910,660 940,555 963,486 978,462 993,455 1025,454 1050,447 1075,420 1110,400 1130,408 1150,420 1170,447 1195,477 1225,483 1245,492 1272,490 1300,525 1340,562 1370,596 1400,621 1440,663 1465,714 1500,758 1540,798 1552,795 1568,786'],
    [1200, 370, COARSE, '90,396 118,370 150,370 175,353 210,343 240,354 268,378 290,440 325,530 350,590 385,664 410,674 440,687 462,711 480,699 500,675 520,645 555,570 582,512 600,495 625,483 655,444 695,375 710,372 755,374 775,360 800,344 850,346 880,363 900,387 920,405 950,454 1000,575 1035,630 1085,696 1105,730 1120,746 1140,754']
];

const histogram = [
    [0, 680, FINE, '8,712 20,724 38,724 58,750 70,752 85,735 100,705 120,662 140,640 155,600 165,560 178,528 190,518 203,527 215,545 235,592 250,606 265,612 282,605 300,622 313,638 325,605 340,555 356,511 370,460 385,420 400,390 412,360 430,335 455,330 475,342 500,370 520,400 542,435 555,480 568,511 585,570 605,622 630,628 648,645 665,620 690,600 710,572 725,540 737,511 750,465 770,400 790,335 808,294 825,294 850,340 880,410 888,430 905,420 925,416 945,424 968,445 988,437 1008,448 1020,475 1040,511 1060,555 1075,595 1090,650 1105,710 1120,775 1135,830 1147,860 1175,873 1195,860 1215,805 1235,760 1255,712 1270,640 1285,570 1300,511 1310,450 1325,380 1340,300 1355,245 1375,205 1390,175 1405,158 1420,168 1440,195 1455,240 1470,310 1485,385 1500,450 1518,511 1540,580 1568,632'],
    [640, 680, FINE, '12,640 30,620 50,570 78,511 90,500 118,492 145,503 155,470 180,435 200,408 220,402 240,430 255,475 270,511 290,565 320,600 345,655 365,720 380,795 388,808 405,802 435,758 450,705 470,655 490,575 510,511 525,460 545,405 565,382 590,372 615,373 645,387 665,373 695,356 722,372 745,355 760,310 775,260 790,235 805,228 820,260 840,305 860,360 875,410 887,465 900,511 920,575 945,635 965,700 980,770 995,860 1010,900 1025,918 1042,928 1058,912 1080,860 1100,800 1120,730 1140,680 1155,600 1180,511 1195,420 1215,330 1235,278 1248,273 1280,293 1312,336 1340,323 1360,327 1380,370 1410,410 1430,465 1448,511 1470,550 1498,582 1520,550 1555,550 1568,520'],
    [1280, 680, FINE, '2,511 15,460 35,420 55,412 82,404 100,420 120,440 130,475 142,511 160,590 175,650 200,710 220,765 235,795 250,780 270,730 295,640 320,570 343,511 360,420 375,355 395,305 415,288 440,270 460,264 472,303 500,315 530,348 545,385 560,440 578,511 600,590 630,665 660,740 685,795 715,805 740,750 765,660 785,580 800,500 812,452 830,450 860,460 890,464 910,456 925,467 942,456 955,485 990,502 1010,497 1035,462 1055,430 1085,428 1115,411 1145,416 1165,432 1185,420 1205,418 1220,405 1230,405']
];

const fast = [
    [0, 680, FINE, '8,382 20,391 38,391 55,428 73,457 90,454 120,454 138,464 148,462 158,450 168,418 185,409 197,412 215,456 225,490 237,555 250,590 265,622 282,645 300,695 312,737 325,736 340,708 357,680 385,615 398,595 420,540 432,507 445,490 463,470 505,469 525,485 545,498 565,560 590,630 608,695 625,703 645,739 655,739 675,716 700,705 725,670 750,600 770,520 790,430 808,388 830,373 850,382 870,410 883,432 895,430 910,400 945,338 965,322 985,270 1010,219 1030,216 1058,215 1072,235 1095,300 1110,375 1130,490 1150,595 1175,680 1200,770 1222,785 1240,818 1262,842 1275,830 1300,750 1320,670 1350,545 1368,510 1390,435 1408,403 1435,387 1455,393 1475,450 1490,490 1500,535 1520,570 1545,603 1568,630'],
    [640, 680, FINE, '12,625 30,595 50,540 70,475 90,430 110,408 133,400 147,407 158,372 170,355 190,322 210,290 222,283 237,290 255,330 270,360 290,400 325,432 350,490 370,590 388,680 405,715 425,730 437,747 480,745 500,705 520,682 545,645 565,632 600,634 625,651 650,658 680,630 700,592 722,575 745,520 765,410 785,285 808,190 835,132 850,122 872,118 885,140 900,168 945,215 960,262 980,345 1000,475 1020,560 1050,660 1070,695 1100,717 1120,716 1137,734 1155,722 1180,685 1195,635 1215,590 1240,552 1260,565 1290,583 1312,603 1330,575 1362,530 1385,536 1410,520 1425,528 1445,548 1465,562 1482,565 1498,582 1520,543 1558,538 1568,515'],
    [1280, 680, FINE, '2,511 15,450 40,380 65,358 85,328 122,322 140,370 165,455 178,515 200,580 220,660 232,720 248,755 268,748 295,698 310,692 340,645 355,590 375,510 395,430 430,382 445,345 462,327 475,344 495,322 520,293 540,271 565,298 588,350 610,377 640,425 660,480 682,560 700,590 718,638 733,640 745,649 765,625 790,560 810,510 822,507 850,545 880,578 910,593 925,612 942,610 965,652 990,682 1008,682 1035,655 1060,600 1090,565 1128,510 1150,490 1168,490 1190,458 1202,452 1215,425 1230,408']
];

const slow = [
    [0, 680, FINE, '8,182 42,182 60,198 85,238 110,280 135,330 160,370 190,403 225,448 250,490 285,560 320,625 355,682 375,700 395,704 412,698 440,675 470,643 520,585 545,568 575,563 605,575 650,608 700,627 740,638 775,640 795,628 835,577 885,518 925,465 965,390 1000,300 1040,210 1065,172 1085,155 1105,155 1125,183 1150,240 1185,350 1220,500 1255,640 1285,728 1310,775 1335,800 1360,803 1382,793 1415,745 1465,650 1510,575 1568,507'],
    [640, 680, FINE, '45,475 90,438 125,416 160,412 195,405 235,378 275,354 325,338 358,341 385,375 410,435 445,530 490,650 520,715 550,750 590,772 645,784 670,775 700,740 750,662 775,590 800,500 830,365 860,260 890,185 920,130 955,98 980,98 1005,133 1050,245 1090,370 1130,520 1170,655 1205,745 1235,782 1260,794 1290,791 1325,768 1385,670 1435,580 1475,522 1500,510 1530,504 1568,500'],
    [1280, 680, FINE, '25,488 55,464 85,437 110,402 140,368 162,360 185,370 215,412 255,505 290,575 330,625 365,650 400,635 430,608 480,543 520,465 560,370 600,298 630,262 655,253 675,265 700,305 750,430 800,540 835,585 880,628 920,655 960,673 1000,693 1040,692 1095,650 1150,580 1190,548 1230,513']
];

function toPoints(blocks) {
    return blocks.flatMap(([left, top, units, text]) => text.split(' ').map(pair => {
        const [x, y] = pair.split(',').map(Number);
        return [left + x / units, top + y / 3];
    }));
}

function linePath(points) {
    return 'M' + points.map(([x, y]) => x.toFixed(1) + ' ' + y.toFixed(1)).join('L');
}

function setPath(selector, d) {
    document.querySelector(selector).setAttribute('d', d);
}

// One marker per bar; fill in bars that were skipped on flat stretches
function dotsPath(points) {
    let d = '';
    points.forEach(([x, y], i) => {
        const next = points[i + 1] || [x, y];
        const bars = Math.max(1, Math.round((next[0] - x) / BAR));
        for (let b = 0; b < bars; b++) {
            const px = Math.round(x + (next[0] - x) * b / bars);
            const py = Math.round(y + (next[1] - y) * b / bars);
            d += `M${px - 1} ${py - 2}h3v4h-3v-1h-1v-2h1z`;
        }
    });
    return d;
}

function histogramPath(points) {
    const zero = 850;
    let d = '';
    let i = 0;
    for (let x = 3; x < 1782; x += BAR) {
        while (i < points.length - 2 && points[i + 1][0] < x) i++;
        const [x1, y1] = points[i];
        const [x2, y2] = points[i + 1];
        const y = Math.round(y1 + (y2 - y1) * (x - x1) / (x2 - x1));
        d += `M${x} ${zero}V${y}h${BAR}V${zero}z`;
    }
    return d;
}

function drawGrid(selector, top, bottom) {
    let d = '';
    for (let x = 17.5; x < 1783; x += 18) d += `M${x} ${top}V${bottom}`;
    document.querySelector(selector).innerHTML = `<path d="${d}"/>`;
}

function drawDates() {
    let ticks = 'M9.5 990v5M17.5 990v11';
    let labels = '<text x="24" y="1014">5/02</text>';
    DATES.forEach((date, i) => {
        const x = 77.5 + i * 68;
        ticks += `M${x} 990v5`;
        labels += `<text x="${date === '17:00' ? 1779 : x + 6}" y="1014">${date}</text>`;
    });
    document.querySelector('.dates').innerHTML = `<path class="axis" d="${ticks}"/>` + labels;
}

drawGrid('#price .grid', 109, 692);
drawGrid('#macd .grid', 714, 987);
drawDates();

const bars = toPoints(close);
setPath('.close-line', linePath(bars));
setPath('.dots', dotsPath(bars));
setPath('.average', linePath(toPoints(average)));
setPath('.average-slow', linePath(toPoints(averageSlow)));
setPath('.histogram', histogramPath(toPoints(histogram)));
setPath('.fast-line', linePath(toPoints(fast)));
setPath('.slow-line', linePath(toPoints(slow)));
```
